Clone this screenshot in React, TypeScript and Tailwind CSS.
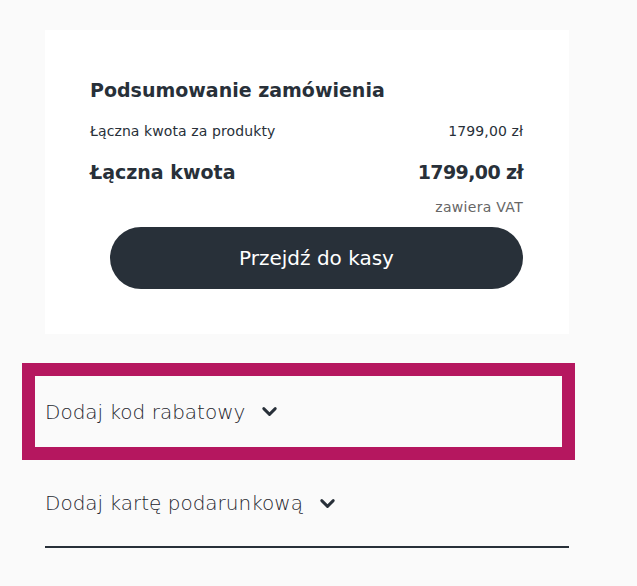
import { ChevronDown } from 'lucide-react'

const font = { fontFamily: '"DejaVu Sans", "Noto Sans", sans-serif' }

function Row({ label, value, bold }: { label: string; value: string; bold?: boolean }) {
  return (
    <div className={`flex items-center justify-between ${bold ? 'text-[19px] font-bold h-[30px]' : 'text-[14px] tracking-[0.1px] h-[20px]'} text-[#283039]`}>
      <span>{label}</span>
      <span className={bold ? 'tracking-[-0.6px]' : ''}>{value}</span>
    </div>
  )
}

function AccordionToggle({ label }: { label: string }) {
  return (
    <button type="button" className="flex items-center gap-[13px] text-[20px] font-light text-[#1f262e]">
      <span>{label}</span>
      <ChevronDown className="w-[23px] h-[23px] text-[#283039]" strokeWidth={3} />
    </button>
  )
}

export default function App() {
  return (
    <div className="min-h-[586px] w-[637px] bg-[#fafafa] pt-[30px] px-[45px]" style={font}>
      {/* podsumowanie */}
      <div className="w-[524px] bg-white pl-[45px] pr-[46px] pt-[47px] pb-[45px]">
        <h2 className="text-[19px] font-bold text-[#283039] leading-[26px]">Podsumowanie zamówienia</h2>
        <div className="mt-[18px]">
          <Row label="Łączna kwota za produkty" value="1799,00 zł" />
        </div>
        <div className="mt-[16px]">
          <Row label="Łączna kwota" value="1799,00 zł" bold />
        </div>
        <div className="mt-[11px] text-right text-[14px] tracking-[0.3px] text-[#666] leading-[18px]">zawiera VAT</div>
        <div className="mt-[11px] pl-[20px]">
          <button type="button" className="w-full h-[62px] rounded-full bg-[#283039] text-white text-[20px]">
            Przejdź do kasy
          </button>
        </div>
      </div>

      {/* kod rabatowy - zaznaczony */}
      <div className="mt-[29px] ml-[-23px] w-[553px] h-[97px] border-[13px] border-[#b5175f] flex items-center pl-[10px]">
        <AccordionToggle label="Dodaj kod rabatowy" />
      </div>

      <div className="w-[524px] pt-[28px] pb-[28px] border-b-2 border-[#283039]">
        <AccordionToggle label="Dodaj kartę podarunkową" />
      </div>
    </div>
  )
}
